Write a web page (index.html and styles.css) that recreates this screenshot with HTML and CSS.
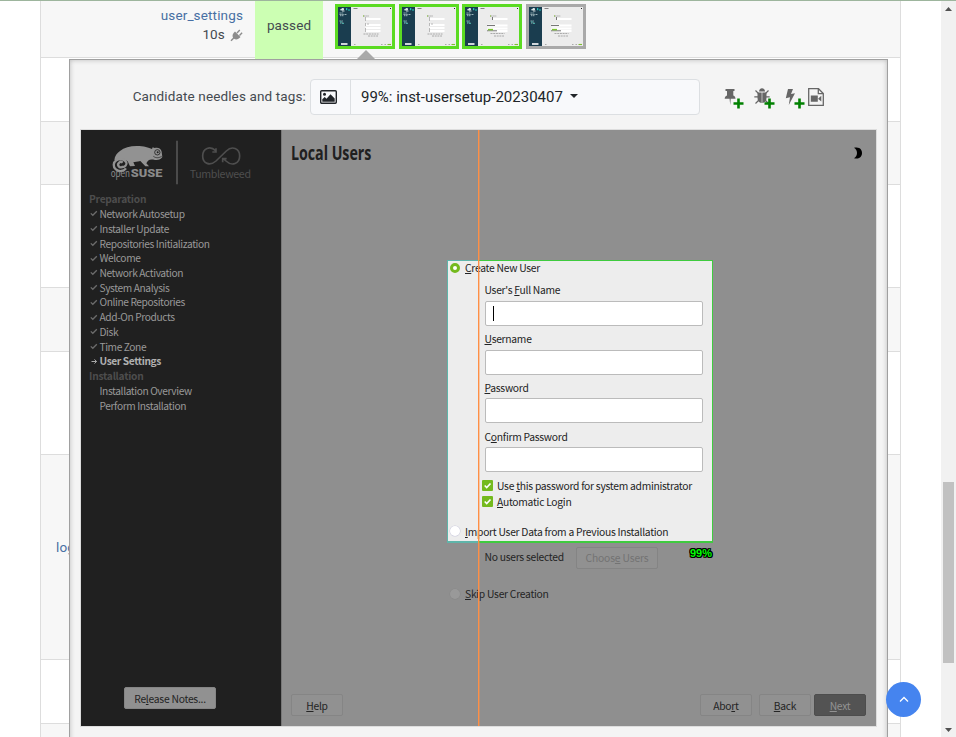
FILE: index.html
```html
<!DOCTYPE html>
<html lang="en">
<head>
<meta charset="utf-8">
<title>Test details</title>
<link rel="stylesheet" href="styles.css">
</head>
<body>
<svg class="defs" width="0" height="0">
  <defs>
    <g id="shot-base">
      <rect width="54" height="39" fill="#ececec"/>
      <rect width="13" height="39" fill="#1a3d4f"/>
      <path d="M2.500 3 4 1.500h1.500V3zM4 4h2.500" stroke="#dbe7e8" fill="#dbe7e8" stroke-width=".9"/>
      <path d="M8 2h1.500M10 3h2M8.500 1.200v2" stroke="#26c9bd" stroke-width="1" fill="none"/>
      <path d="M1.500 6h4M1.500 7.500h5M7 7.500h2M2 8.700h4M1.500 14h3.500M2 16h4" stroke="#a8c0c4" stroke-width=".9" stroke-dasharray="1.400 .5"/>
      <path d="M2 15h2M4 16.500h2" stroke="#47b9ad" stroke-width=".8"/>
      <path d="M3 37h6.500" stroke="#fff" stroke-width="1.600"/>
      <path d="M15.500 1.500h4" stroke="#777" stroke-width=".9"/>
      <path d="M52 1.500h1" stroke="#222"/>
      <path d="M16 37.500h1.500M43 37.500h1.500M46.500 37.500h1.500" stroke="#999" stroke-width=".8"/>
      <path d="M49.500 37.500h3.500" stroke="#7fbf2f" stroke-width="1.100"/>
    </g>
    <g id="shot-a">
      <use href="#shot-base"/>
      <path d="M25.500 9h5.500" stroke="#999" stroke-width=".8" stroke-dasharray="1.500 .4"/>
      <path d="M25 9h1" stroke="#74b71f"/>
      <path d="M27.500 12h15M27.500 18h15M27.500 21h15M27.500 24h15" stroke="#fff" stroke-width="1.800"/>
      <path d="M27.500 10v4M27.500 16v3M29 17h2M27.500 21v4" stroke="#aaa" stroke-width=".8"/>
      <path d="M25.500 27h15M30 29h10" stroke="#999" stroke-width=".8" stroke-dasharray="2 .7"/>
    </g>
    <g id="shot-b">
      <use href="#shot-base"/>
      <path d="M25.500 9h6" stroke="#999" stroke-width=".8" stroke-dasharray="1.500 .4"/>
      <path d="M25 9h1" stroke="#74b71f"/>
      <path d="M27.500 12h15M22.500 18.500h20M22.500 21.500h20M22.500 24h20" stroke="#fff" stroke-width="1.800"/>
      <path d="M27.500 10v3M22 18.500h8M22 23.800h10" stroke="#777" stroke-width="1"/>
      <path d="M23 22.600h5" stroke="#7cc433" stroke-width="1.500"/>
      <path d="M25.500 26.500h14M29 29h10" stroke="#999" stroke-width=".8" stroke-dasharray="2 .7"/>
    </g>
    <path id="plus" d="M3.700 0h2.600v3.700H10v2.600H6.300V10H3.700V6.300H0V3.700h3.700z" fill="#008000"/>
    <path id="tick" d="M.8 3.400 2.800 5.300 6.800 1.300" fill="none" stroke="#6c6c6c" stroke-width="1.300"/>
  </defs>
</svg>

<div class="viewport">
  <main class="page">
    <div class="results">
      <div class="row row-main odd">
        <div class="module"><a>user_settings</a>
          <span class="time">10s
            <svg width="13" height="13" viewBox="0 0 13 13"><path d="M5 2.500 10.500 8C8.500 10.500 6 11 4 9.800L1.500 12.200.5 11.200 3 8.700C1.900 6.500 2.800 4.200 5 2.500zM6.500 3.500 9.300.6l1 1L7.500 4.500zM9 6l2.600-2.700 1 1L10 7z" fill="#8c8c8c"/></svg>
          </span>
        </div>
        <div class="state">passed</div>
        <div class="shots">
          <svg class="shot" viewBox="0 0 54 39"><use href="#shot-a"/></svg>
          <svg class="shot" viewBox="0 0 54 39"><use href="#shot-a"/></svg>
          <svg class="shot" viewBox="0 0 54 39"><use href="#shot-b"/></svg>
          <svg class="shot plain" viewBox="0 0 54 39"><use href="#shot-b"/></svg>
        </div>
      </div>
      <div class="row h64"></div>
      <div class="row odd h63"></div>
      <div class="row h103"></div>
      <div class="row odd h64"></div>
      <div class="row h103"></div>
      <div class="row odd h205"><a class="next-module">logpackages</a></div>
      <div class="row h64"></div>
      <div class="row odd h63"></div>
    </div>
  </main>

  <aside class="scrollbar">
    <svg width="15" height="15" viewBox="0 0 15 15"><path d="M4 10h7L7.500 6z" fill="#505050"/></svg>
    <div class="thumb"></div>
    <svg class="down" width="15" height="15" viewBox="0 0 15 15"><path d="M4 6h7L7.500 10z" fill="#505050"/></svg>
  </aside>

  <svg class="pointer" width="20" height="10" viewBox="0 0 20 10"><path d="M0 10 10 0 20 10z" fill="#a9a9a9"/></svg>

  <section class="preview">
    <header class="toolbar">
      <span class="caption">Candidate needles and tags:</span>
      <div class="picker">
        <div class="pic">
          <svg width="17" height="14" viewBox="0 0 17 14"><rect x=".7" y=".7" width="15.600" height="12.600" rx="1" fill="none" stroke="#212529" stroke-width="1.400"/><circle cx="4.500" cy="4.300" r="1.500" fill="#212529"/><path d="M2.300 11.700V9.300l2.400-2.400 1.800 1.800 4-4.400 4.200 4.200v3.200z" fill="#212529"/></svg>
        </div>
        <div class="needle"><span>99%: inst-usersetup-20230407</span><i class="caret"></i></div>
      </div>
      <div class="actions">
        <svg width="22" height="22" viewBox="0 0 22 22"><path d="M1.500 1h9v2H9.300v4.500c1.500.6 2.200 1.700 2.200 3.200H6.700L6.200 17 5.600 10.700H.7C.7 9.200 1.500 8.100 3 7.500V3H1.500z" fill="#666"/><use href="#plus" x="9.500" y="10.500"/></svg>
        <svg width="22" height="22" viewBox="0 0 22 22"><path d="M5 3.600C5.300 1.200 6.500.3 8 .3s2.800.9 3.100 3.300z" fill="#666"/><path d="M3.500 4.600h4.200V15C5 14.700 3.500 13 3.500 10zM8.300 4.600h4.200V10c0 3-1.500 4.700-4.200 5z" fill="#666"/><path d="M1.500 2.500 4.500 5.500M14.500 2.500l-3 3M.3 8.800H4M12 8.800h3.700M1.500 15.500 5 12M14.500 15.500 11 12" stroke="#666" stroke-width="1.200"/><use href="#plus" x="10.500" y="10.500"/></svg>
        <svg width="22" height="22" viewBox="0 0 22 22"><path d="M5 1h5L8 6l4-.7L5.800 17 7 9.300 2.800 10.300z" fill="#666"/><use href="#plus" x="11.500" y="10.500"/></svg>
        <svg class="video" width="16" height="18" viewBox="0 0 16 18"><path d="M.7.7h9.800l4.800 4.800v11.800H.7zM10.300.7v5h5" fill="none" stroke="#666" stroke-width="1.300"/><path d="M2.800 7.500h7v6.300h-7zM10.300 10.500l3-2.700v5.600l-3-2.500z" fill="#666"/></svg>
      </div>
    </header>

    <div class="screen">
      <nav class="steps">
        <svg class="logo" width="200" height="55" viewBox="33 15 600 165">
          <path d="M133 106C134 92 141 84 150 78C162 68 180 63 200 63C222 63 236 68 246 72L248 67L254 69C264 66 273 70 275 80L277 96C273 103 266 106 255 105C245 103 240 103 234 107L229 115L237 124L226 124L211 108C201 110 195 111 190 112L195 123L180 124L173 109L160 102Z" fill="#929292"/>
          <path d="M168 130A20 18 0 1 1 169 112C172 120 164 127 156 126A8 8 0 1 1 158 113" fill="#202020" stroke="#929292" stroke-width="7"/>
          <circle cx="262" cy="82" r="8" fill="#929292" stroke="#202020" stroke-width="2.500"/><circle cx="263" cy="82" r="3" fill="#202020"/>
          <path d="M250 94C260 101 268 98 275 94" fill="none" stroke="#202020" stroke-width="2"/>
          <text class="logo-open" x="122" y="155" textLength="58" lengthAdjust="spacingAndGlyphs">open</text>
          <text class="logo-suse" x="182" y="155" textLength="95" lengthAdjust="spacingAndGlyphs">SUSE</text>
          <path d="M321 47V178" stroke="#5a5a5a" stroke-width="4.500"/>
          <path d="M437 77C420 61 398 70 398 93C398 116 420 124 438 108L469 78C486 61 509 70 509 93C509 116 486 125 468 108L459 100M438 70V81H427M458 112V101H470" fill="none" stroke="#4e4e4e" stroke-width="5"/>
          <text class="logo-tw" x="359" y="158" textLength="184">Tumbleweed</text>
        </svg>
        <ul>
          <li class="head">Preparation</li>
          <li class="done"><svg class="mark" viewBox="0 0 8 7"><use href="#tick"/></svg>Network Autosetup</li>
          <li class="done"><svg class="mark" viewBox="0 0 8 7"><use href="#tick"/></svg>Installer Update</li>
          <li class="done"><svg class="mark" viewBox="0 0 8 7"><use href="#tick"/></svg>Repositories Initialization</li>
          <li class="done"><svg class="mark" viewBox="0 0 8 7"><use href="#tick"/></svg>Welcome</li>
          <li class="done"><svg class="mark" viewBox="0 0 8 7"><use href="#tick"/></svg>Network Activation</li>
          <li class="done"><svg class="mark" viewBox="0 0 8 7"><use href="#tick"/></svg>System Analysis</li>
          <li class="done"><svg class="mark" viewBox="0 0 8 7"><use href="#tick"/></svg>Online Repositories</li>
          <li class="done"><svg class="mark" viewBox="0 0 8 7"><use href="#tick"/></svg>Add-On Products</li>
          <li class="done"><svg class="mark" viewBox="0 0 8 7"><use href="#tick"/></svg>Disk</li>
          <li class="done"><svg class="mark" viewBox="0 0 8 7"><use href="#tick"/></svg>Time Zone</li>
          <li class="current"><svg class="mark" viewBox="0 0 8 7"><path d="M1.500 3.500h5M4.500 1.400l2 2.100-2 2.100" fill="none" stroke="#aaa" stroke-width="1"/></svg>User Settings</li>
          <li class="head">Installation</li>
          <li class="todo">Installation Overview</li>
          <li class="todo">Perform Installation</li>
        </ul>
        <div class="button release"><span>Re<u>l</u>ease Notes...</span></div>
      </nav>

      <div class="dialog">
        <div class="titlebar">
          <h1>Local Users</h1>
          <svg width="10" height="12" viewBox="0 0 10 12"><path d="M1 .8C7-.6 9 3 9 6s-2 6.600-8 5.200C5 9 5 3 1 .8z" fill="#000"/></svg>
        </div>

        <div class="match">
          <div class="match-body">
            <div class="option"><i class="radio on"></i><span><u>C</u>reate New User</span></div>
            <div class="fields">
              <label>User's <u>F</u>ull Name</label><div class="input"><i class="cursor"></i></div>
              <label><u>U</u>sername</label><div class="input"></div>
              <label><u>P</u>assword</label><div class="input"></div>
              <label>C<u>o</u>nfirm Password</label><div class="input"></div>
            </div>
            <div class="check"><svg viewBox="0 0 11 11"><rect width="11" height="11" rx="1" fill="#74ba1e"/><path d="M2.700 5.500 4.700 7.500 8.500 3.500" fill="none" stroke="#fff" stroke-width="1.600"/></svg><span>Use <u>t</u>his password for system administrator</span></div>
            <div class="check"><svg viewBox="0 0 11 11"><rect width="11" height="11" rx="1" fill="#74ba1e"/><path d="M2.700 5.500 4.700 7.500 8.500 3.500" fill="none" stroke="#fff" stroke-width="1.600"/></svg><span><u>A</u>utomatic Login</span></div>
            <div class="option import"><i class="radio"></i><span><u>I</u>mport User Data from a Previous Installation</span></div>
          </div>
        </div>

        <div class="choose">
          <span class="none">No users selected</span>
          <span class="button ghost"><span>Choos<u>e</u> Users</span></span>
          <span class="score">99%</span>
        </div>
        <div class="option skip"><i class="radio dim"></i><span><u>S</u>kip User Creation</span></div>

        <footer>
          <span class="button"><span><u>H</u>elp</span></span>
          <span class="spacer"></span>
          <span class="button abort"><span>Abo<u>r</u>t</span></span>
          <span class="button back"><span><u>B</u>ack</span></span>
          <span class="button primary"><span><u>N</u>ext</span></span>
        </footer>
      </div>
      <div class="split"></div>
    </div>
  </section>

  <div class="to-top"><svg width="10" height="7" viewBox="0 0 10 7"><path d="M1 5.500 5 1.500 9 5.500" fill="none" stroke="#fff" stroke-width="1.300"/></svg></div>
</div>
</body>
</html>
```
FILE: styles.css
```css
* { box-sizing: border-box; }
body { margin: 0; background: #fff; font-family: Roboto, sans-serif; font-size: 13.5px; color: #444a50; overflow: hidden; }
.defs { position: absolute; }
.viewport { position: relative; display: flex; height: 737px; overflow: hidden; border-top: 1px solid #9db59d; }
.page { flex: 1; padding-left: 40px; }
.results { width: 861px; border: solid #ddd; border-width: 0 1px; }
.row { border-bottom: 1px solid #ddd; background: #fff; }
.odd { background: #f7f7f7; }
.row-main { display: flex; height: 57px; }
.h63 { height: 63px; }
.h64 { height: 64px; }
.h103 { height: 103px; }
.h205 { height: 205px; }
a { color: #476fa3; letter-spacing: .14px; }
.module { width: 214px; padding: 5px 12px 0 0; text-align: right; line-height: 19px; }
.module a, .time { display: block; }
.time svg { vertical-align: -3px; margin-left: 2px; }
.state { display: flex; justify-content: center; align-items: center; width: 68px; height: 50px; padding-bottom: 2px; background: #ccffb3; box-shadow: 0 8px #ccffb3; letter-spacing: .1px; }
.shots { display: flex; gap: 3.700px; padding: 3px 0 0 12px; }
.shot { width: 60px; height: 45px; border: 3px solid #5bdb22; }
.shot.plain { border-color: #a9a9a9; }
.next-module { display: block; padding: 84px 0 0 15px; }

.scrollbar { width: 15px; background: #f1f1f1; display: flex; flex-direction: column; }
.thumb { width: 11px; height: 181px; margin: 466px 0 0 2px; background: #c1c1c1; }
.down { margin-top: auto; }

.pointer { position: absolute; left: 356px; top: 49px; }
.preview { position: absolute; left: 69px; top: 58px; width: 819px; height: 690px; background: #f4f4f4; border: 1px solid #a0a0a0; box-shadow: inset 0 0 5px #bbb; padding: 0 10px; }
.toolbar { display: flex; height: 69px; padding-top: 1px; }
.caption { width: 230px; padding-right: 4px; line-height: 70px; text-align: right; letter-spacing: .13px; white-space: nowrap; }
.picker { display: flex; width: 390px; height: 36px; margin-top: 18px; border: 1px solid #dcdfe2; border-radius: 4px; background: #f8f9fb; color: #212529; }
.pic { width: 40px; padding: 0 0 1px 9px; display: flex; align-items: center; border-right: 1px solid #dcdfe2; }
.needle { display: flex; align-items: center; padding-left: 10px; font-size: 15px; }
.caret { margin: -2px 0 0 7px; border: 4.500px solid transparent; border-top-color: #212529; border-bottom: 0; }
.actions { display: flex; margin: 27px 0 0 24px; }
.actions svg { margin-right: 7.500px; }
.actions .video { margin-left: -4.500px; }

.screen { position: relative; display: flex; width: 797px; height: 598px; border: 1px solid #ddd; background: #8f8f8f; font-family: "Noto Sans CJK SC", sans-serif; font-size: 10.300px; letter-spacing: -.27px; color: #242424; white-space: nowrap; }
.steps { width: 200px; background: #202020; color: #999; display: flex; flex-direction: column; }
.logo { display: block; letter-spacing: 0; }
.logo-open { font-family: "Noto Sans CJK SC", sans-serif; font-size: 28px; fill: #8a8a8a; }
.logo-suse { font-family: Roboto, sans-serif; font-weight: 900; font-size: 32px; fill: #8a8a8a; }
.logo-tw { font-family: "Noto Sans CJK SC", sans-serif; font-size: 32px; fill: #4e4e4e; }
.steps ul { list-style: none; margin: 7.300px 0 0; padding: 0 0 0 8px; font-size: 10.200px; letter-spacing: -.39px; }
.steps li { height: 14.740px; line-height: 14.740px; display: flex; align-items: center; }
.steps .head { color: #4d4d4d; font-weight: 700; letter-spacing: -.23px; }
.mark { flex: none; width: 8px; height: 7px; margin: -1px 1.500px 0 1px; }
.steps .current { color: #b0b0b0; font-weight: 700; }
.steps .todo { padding-left: 10.500px; }
.button { display: flex; justify-content: center; align-items: center; width: 52px; height: 22px; border: 1px solid #858585; border-radius: 2px; background: #919191; }
u { text-underline-offset: 1px; text-decoration-thickness: 1px; }
.release { width: 92px; margin: auto 0 17px 43px; color: #242424; letter-spacing: -.25px; }

.dialog { flex: 1; display: flex; flex-direction: column; border-left: 1px solid #777; }
.titlebar { height: 130px; padding: 17px 13px 0 9px; display: flex; justify-content: space-between; }
h1 { margin: -6px 0 0; height: 24px; font: 700 19px/24px "Open Sans", sans-serif; letter-spacing: -.05px; transform: scaleX(.75); transform-origin: 0 0; color: #202020; }
.match { width: 266px; height: 283px; margin-left: 165px; padding: 1px 1px 2px 1px; background: linear-gradient(90deg, #5fb5aa 31px, #3fcb3f 31px); }
.match-body { height: 280px; background: #ededed; }
.option { display: flex; align-items: center; height: 13px; padding-left: 2px; }
.radio { width: 10px; height: 10px; margin-right: 5px; border-radius: 50%; background: #fff; box-shadow: 0 0 0 .5px #ccd; }
.radio.on { background: #fff; border: 3.500px solid #74ba1e; box-shadow: none; }
.radio.dim { background: #999; box-shadow: 0 0 0 .5px #888; }
.fields { padding: 8px 0 0 36.500px; }
.fields label { display: block; height: 16px; line-height: 16px; }
.input { width: 218px; height: 25px; margin: 2.700px 0 5.200px; border: 1px solid #bbb; border-radius: 2px; background: #fff; padding: 4px 7.500px; }
.cursor { display: block; width: 1px; height: 15px; background: #000; }
.check { display: flex; align-items: center; height: 15.700px; padding-left: 33.500px; }
.check svg { flex: none; width: 11px; height: 11px; margin-right: 4.500px; }
.import { margin-top: 14.500px; height: 16px; }
.choose { display: flex; align-items: center; height: 22px; margin: 4px 0 0 202.500px; }
.none { width: 91.500px; margin-top: -3px; }
.ghost { flex: none; width: 82px; padding-bottom: 1px; color: #737373; border-color: #848484; letter-spacing: -.15px; }
.score { margin: -11px 0 0 32px; font: 700 11px "Liberation Sans", sans-serif; color: #0f0; letter-spacing: 0; text-shadow: 1px 0 #000, -1px 0 #000, 0 1px #000, 0 -1px #000, 1px 1px #000, -1px -1px #000, 1px -1px #000, -1px 1px #000; }
.skip { margin: 18px 0 0 166px; }
footer { display: flex; margin-top: auto; padding: 0 10px 10px 9px; }
.spacer { flex: 1; }
.abort { margin-right: 7px; }
.back { margin-right: 3px; }
.primary { background: #535353; border-color: #4d4d4d; color: #929292; }
.split { position: absolute; left: 397px; top: 0; width: 2px; height: 596px; background: linear-gradient(90deg, #ff8f45 1px, rgba(255, 143, 69, .4) 1px); }
.to-top { position: absolute; left: 886px; top: 681px; width: 35px; height: 35px; border-radius: 50%; background: #4584ef; display: flex; justify-content: center; align-items: center; }
```
